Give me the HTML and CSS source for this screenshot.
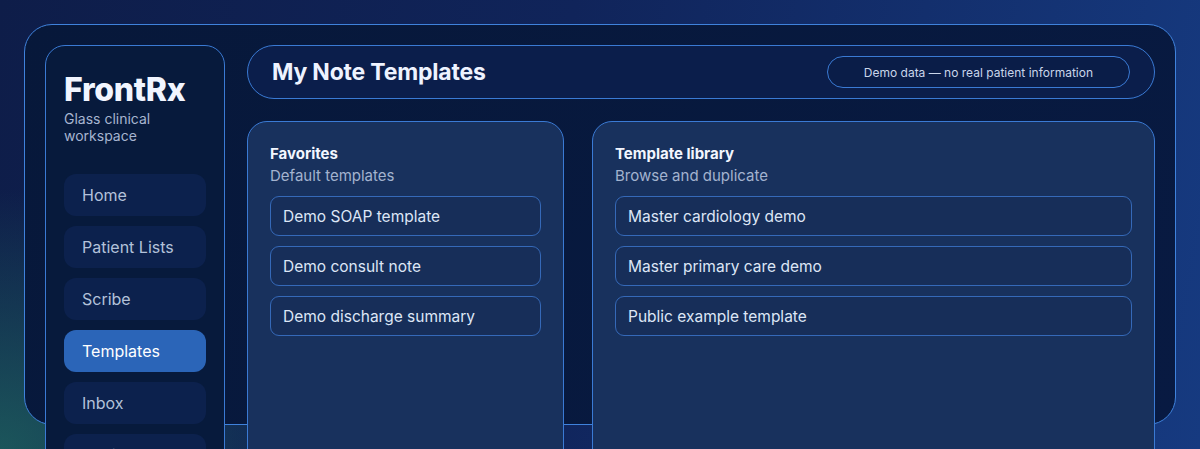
FILE: index.html
```html
<!DOCTYPE html>
<html>

<head>

	<title>FrontRx - My Note Templates</title>

	<link rel="stylesheet" href="styles.css">
</head>

<body>

	<div class="shell">

		<aside class="sidebar">
			<div class="brand">FrontRx</div>
			<div class="tagline">Glass clinical workspace</div>

			<nav class="nav">
				<a class="navItem" href="#">Home</a>
				<a class="navItem" href="#">Patient Lists</a>
				<a class="navItem" href="#">Scribe</a>
				<a class="navItem active" href="#">Templates</a>
				<a class="navItem" href="#">Inbox</a>
				<a class="navItem" href="#">Settings</a>
			</nav>
		</aside>

		<main class="main">
			<header class="topBar">
				<h1 class="pageTitle">My Note Templates</h1>
				<span class="demoBadge">Demo data — no real patient information</span>
			</header>

			<div class="panels">
				<section class="panel">
					<h2 class="panelTitle">Favorites</h2>
					<p class="panelSub">Default templates</p>
					<div class="templateList">
						<div class="templateItem">Demo SOAP template</div>
						<div class="templateItem">Demo consult note</div>
						<div class="templateItem">Demo discharge summary</div>
					</div>
				</section>

				<section class="panel">
					<h2 class="panelTitle">Template library</h2>
					<p class="panelSub">Browse and duplicate</p>
					<div class="templateList">
						<div class="templateItem">Master cardiology demo</div>
						<div class="templateItem">Master primary care demo</div>
						<div class="templateItem">Public example template</div>
					</div>
				</section>
			</div>
		</main>

	</div>

</body>

</html>
```

FILE: styles.css
```css
* {
	box-sizing: border-box;
}

html, body {
	margin: 0;
	height: 100%;
	overflow: hidden;
}

body {
	padding: 24px;
	font-family: Inter, 'Noto Sans', sans-serif;
	color: #e6edfa;
	background:
		radial-gradient(ellipse 320px 260px at 0% 100%, rgba(32, 104, 96, 0.75), transparent),
		linear-gradient(100deg, #0e1d49 0%, #10245a 45%, #163a80 100%);
}

/* outer glass frame */
.shell {
	height: 100%;
	display: grid;
	grid-template-columns: 180px 1fr;
	gap: 22px;
	align-items: start;
	padding: 20px;
	border: 1px solid #3f82dc;
	border-radius: 28px;
	background: linear-gradient(135deg, #07183a 0%, #081a42 100%);
}

/* sidebar */
.sidebar {
	padding: 26px 18px 18px;
	border: 1px solid #3a7ad4;
	border-radius: 20px;
	background: #071a3c;
}

.brand {
	font-size: 32px;
	font-weight: 800;
	line-height: 36px;
	letter-spacing: -0.3px;
	color: #f1f5ff;
}

.tagline {
	margin-top: 2px;
	font-size: 14px;
	line-height: 17px;
	color: #a6b5d0;
}

.nav {
	display: flex;
	flex-direction: column;
	gap: 10px;
	margin-top: 30px;
}

.navItem {
	display: flex;
	align-items: center;
	height: 42px;
	padding: 0 18px;
	border-radius: 12px;
	background: #0c214d;
	color: #b3c1da;
	font-size: 16px;
	text-decoration: none;
}
.navItem.active {
	background: #2b65b8;
	color: #ffffff;
}

/* main column */
.main {
	display: flex;
	flex-direction: column;
	gap: 22px;
	min-width: 0;
}

.topBar {
	display: flex;
	align-items: center;
	justify-content: space-between;
	height: 54px;
	padding: 0 24px;
	border: 1px solid #3a7ad4;
	border-radius: 27px;
	background: #0b1e4b;
}

.pageTitle {
	margin: 0;
	font-size: 23px;
	font-weight: 700;
	letter-spacing: -0.2px;
	color: #eef3ff;
}

.demoBadge {
	display: flex;
	align-items: center;
	height: 32px;
	padding: 0 36px;
	border: 1px solid #3a7ad4;
	border-radius: 16px;
	background: #0a1d48;
	font-size: 12px;
	color: #c9d5ea;
}

.panels {
	display: grid;
	grid-template-columns: 317px 1fr;
	gap: 28px;
}

.panel {
	min-height: 360px;
	padding: 22px;
	border: 1px solid #3a7ad4;
	border-radius: 20px;
	background: #18315d;
}

.panelTitle {
	margin: 0;
	font-size: 15px;
	font-weight: 700;
	line-height: 20px;
	color: #f2f6ff;
}

.panelSub {
	margin: 2px 0 0;
	font-size: 15px;
	line-height: 20px;
	color: #a3b3cf;
}

.templateList {
	display: flex;
	flex-direction: column;
	gap: 10px;
	margin-top: 10px;
}

.templateItem {
	display: flex;
	align-items: center;
	height: 40px;
	padding: 0 12px;
	border: 1px solid #3569b8;
	border-radius: 9px;
	background: #172e59;
	font-size: 15.5px;
	color: #dde6f6;
}
```
